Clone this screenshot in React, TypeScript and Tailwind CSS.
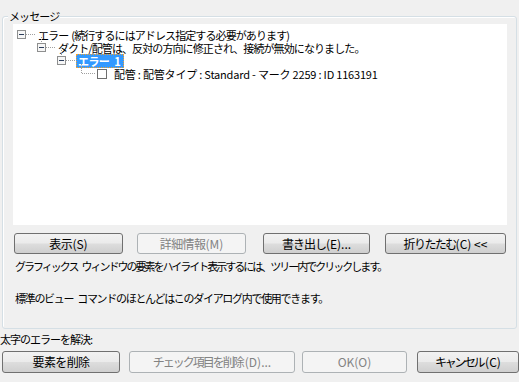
import React from 'react';

const font = { fontFamily: '"Noto Sans CJK JP", "Liberation Sans", sans-serif' };

// tree connector + expander box for one row
const Gutter = ({ stub = false }: { stub?: boolean }) => (
  <svg width="23" height="13" className="shrink-0 overflow-visible">
    {stub && <line x1="8.5" y1="-4" x2="8.5" y2="2" stroke="#a0a0a0" strokeDasharray="1 1" />}
    <rect x="4.5" y="2.5" width="8" height="8" fill="#f6f6f6" stroke="#8e8f8f" />
    <line x1="6" y1="6.5" x2="11" y2="6.5" stroke="#2c3e5c" />
    <line x1="13" y1="6.5" x2="23" y2="6.5" stroke="#a0a0a0" strokeDasharray="1 1" />
  </svg>
);

const LeafGutter = () => (
  <svg width="23" height="13" className="shrink-0 overflow-visible">
    <line x1="8.5" y1="-3" x2="8.5" y2="7" stroke="#a0a0a0" strokeDasharray="1 1" />
    <line x1="9" y1="6.5" x2="22" y2="6.5" stroke="#a0a0a0" strokeDasharray="1 1" />
  </svg>
);

const Button = ({
  children,
  w,
  h = 'h-[21px]',
  disabled = false,
  className = '',
}: {
  children: React.ReactNode;
  w: string;
  h?: string;
  disabled?: boolean;
  className?: string;
}) => (
  <div
    className={`${w} ${h} ${className} flex items-center justify-center whitespace-pre rounded-[3px] border text-[12px] leading-[14px] ${
      disabled
        ? 'border-[#adb2b5] bg-[#f4f4f4] text-[#838383]'
        : 'border-[#707070] bg-[linear-gradient(#f2f2f2_0%,#ebebeb_48%,#dddddd_52%,#cfcfcf_100%)] text-black'
    }`}
  >
    {children}
  </div>
);

export default function App() {
  return (
    <div className="w-[519px] h-[382px] bg-[#f0f0f0] text-black overflow-hidden" style={font}>
      <div className="pt-[16px] pl-[2px]">
        <div className="relative w-[515px] h-[313px] rounded-[3px] border border-[#d5dfe5] shadow-[inset_1px_1px_0_#fff]">
          <span className="absolute left-[5px] top-[-9px] bg-[#f0f0f0] px-[1px] text-[11px] leading-[16px] tracking-[-0.9px]">
            メッセージ
          </span>

          <div className="ml-[10px] mt-[7px] w-[494px] h-[201px] bg-white pt-[4px] text-[11px] leading-[12px] whitespace-pre">
            <div className="flex h-[13px] items-center">
              <Gutter />
              <span className="pl-[2px] tracking-[-0.9px]">
                エラー<span className="pl-[3px]">(続行するにはアドレス指定する必要があります)</span>
              </span>
            </div>
            <div className="flex h-[13px] items-center pl-[20px]">
              <Gutter stub />
              <span className="pl-[2px] tracking-[-0.9px]">ダクト/配管は、反対の方向に修正され、接続が無効になりました。</span>
            </div>
            <div className="flex h-[13px] items-center pl-[40px]">
              <Gutter stub />
              <span className="h-[14px] border border-dotted border-[#f0a030] bg-[#3399ff] pl-[1px] pr-[2px] font-bold leading-[12px] text-white">
                <span className="tracking-[-0.6px]">エラー</span>
                <span className="pl-[5px]">1</span>
              </span>
            </div>
            <div className="flex h-[13px] items-center pl-[60px]">
              <LeafGutter />
              <span className="ml-[1px] h-[10px] w-[10px] shrink-0 border border-[#6f6f6f] bg-white" />
              <span className="pl-[7px] tracking-[-0.2px]">配管 : 配管タイプ : Standard - マーク 2259 : ID 1163191</span>
            </div>
          </div>

          <div className="mt-[8px] ml-[11px] flex">
            <Button w="w-[109px]">
              <span className="tracking-[-0.5px]">表示</span>(S)
            </Button>
            <Button w="w-[109px]" className="ml-[14px]" disabled>
              <span className="tracking-[-0.6px]">詳細情報</span>(M)
            </Button>
            <Button w="w-[107px]" className="ml-[17px]">
              <span className="tracking-[-1px]">書き出し</span>(E)...
            </Button>
            <Button w="w-[121px]" className="ml-[15px]">
              <span className="tracking-[-1.6px]">折りたたむ</span>(C) &lt;&lt;
            </Button>
          </div>

          <div className="ml-[12px] mt-[4px] text-[11px] leading-[16px] whitespace-pre">
            <p className="tracking-[-2px]">
              グラフィックス<span className="pl-[4px]">ウィンドウの要素をハイライト表示するには、ツリー内でクリックします。</span>
            </p>
            <p className="mt-[16px] tracking-[-1.3px]">
              標準のビュー<span className="pl-[4px]">コマンドのほとんどはこのダイアログ内で使用できます。</span>
            </p>
          </div>
        </div>
      </div>

      <p className="mt-[2px] text-[11px] leading-[16px] tracking-[-1px]">太字のエラーを解決:</p>

      <div className="mt-[4px] ml-[2px] flex">
        <Button w="w-[118px]" h="h-[22px]" className="tracking-[-0.6px]">
          要素を削除
        </Button>
        <Button w="w-[166px]" h="h-[22px]" className="ml-[9px]" disabled>
          <span className="tracking-[-2px]">チェック項目を削除</span>
          <span className="pl-[2px]">(D)...</span>
        </Button>
        <Button w="w-[105px]" h="h-[22px]" className="ml-[7px]" disabled>
          OK(O)
        </Button>
        <Button w="w-[102px]" h="h-[22px]" className="ml-[10px]">
          <span className="tracking-[-2.4px]">キャンセル</span>
          <span className="pl-[2px]">(C)</span>
        </Button>
      </div>
    </div>
  );
}
